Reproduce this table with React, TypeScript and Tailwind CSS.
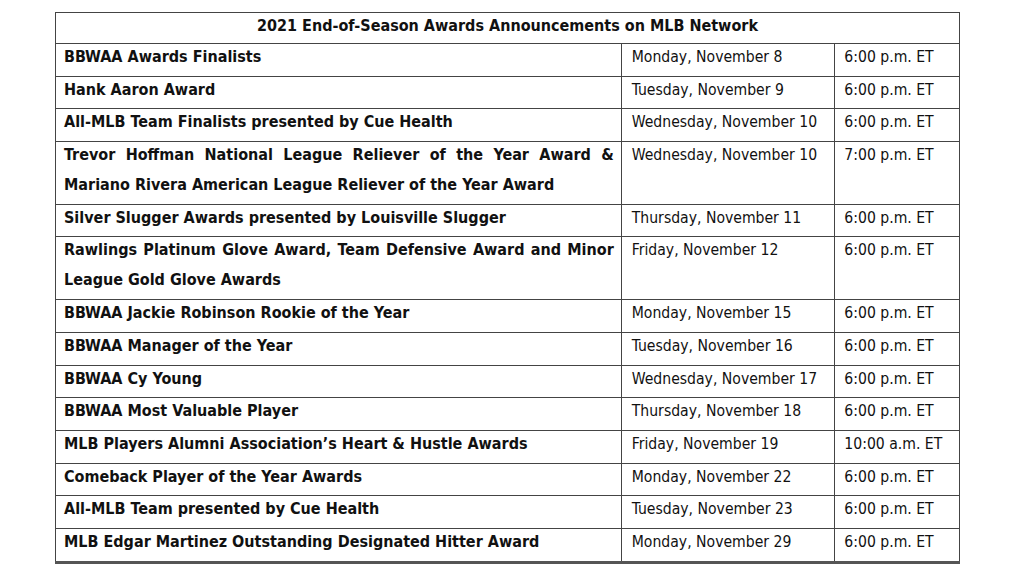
import React from "react";

type Row = { name: string | string[]; date: string; time: string };

const rows: Row[] = [
  { name: "BBWAA Awards Finalists", date: "Monday, November 8", time: "6:00 p.m. ET" },
  { name: "Hank Aaron Award", date: "Tuesday, November 9", time: "6:00 p.m. ET" },
  { name: "All-MLB Team Finalists presented by Cue Health", date: "Wednesday, November 10", time: "6:00 p.m. ET" },
  {
    name: [
      "Trevor Hoffman National League Reliever of the Year Award &",
      "Mariano Rivera American League Reliever of the Year Award",
    ],
    date: "Wednesday, November 10",
    time: "7:00 p.m. ET",
  },
  { name: "Silver Slugger Awards presented by Louisville Slugger", date: "Thursday, November 11", time: "6:00 p.m. ET" },
  {
    name: [
      "Rawlings Platinum Glove Award, Team Defensive Award and Minor",
      "League Gold Glove Awards",
    ],
    date: "Friday, November 12",
    time: "6:00 p.m. ET",
  },
  { name: "BBWAA Jackie Robinson Rookie of the Year", date: "Monday, November 15", time: "6:00 p.m. ET" },
  { name: "BBWAA Manager of the Year", date: "Tuesday, November 16", time: "6:00 p.m. ET" },
  { name: "BBWAA Cy Young", date: "Wednesday, November 17", time: "6:00 p.m. ET" },
  { name: "BBWAA Most Valuable Player", date: "Thursday, November 18", time: "6:00 p.m. ET" },
  { name: "MLB Players Alumni Association\u2019s Heart & Hustle Awards", date: "Friday, November 19", time: "10:00 a.m. ET" },
  { name: "Comeback Player of the Year Awards", date: "Monday, November 22", time: "6:00 p.m. ET" },
  { name: "All-MLB Team presented by Cue Health", date: "Tuesday, November 23", time: "6:00 p.m. ET" },
  { name: "MLB Edgar Martinez Outstanding Designated Hitter Award", date: "Monday, November 29", time: "6:00 p.m. ET" },
];

export default function App() {
  return (
    <div
      className="w-[1024px] h-[576px] bg-white overflow-hidden pt-[12px] pl-[55px]"
      style={{ fontFamily: "'DejaVu Sans Condensed', 'DejaVu Sans', Verdana, sans-serif" }}
    >
      <table className="border-collapse w-[905px] text-[#111] border-b-[3px] border-b-[#555]">
        <colgroup>
          <col className="w-[566px]" />
          <col className="w-[214px]" />
          <col className="w-[125px]" />
        </colgroup>
        <tbody>
          <tr>
            <td
              colSpan={3}
              className="border border-[#444] text-center font-bold text-[16px] leading-[26px] pb-[4px] h-[30px] align-top"
            >
              2021 End-of-Season Awards Announcements on MLB Network
            </td>
          </tr>
          {rows.map((r, i) => (
            <tr key={i}>
              <td className="border border-[#444] font-bold text-[16px] leading-[30px] pl-[8px] pr-[7px] pt-0 pb-[1.7px] align-top">
                <div className="-mt-[2px] mb-[2px]">
                  {Array.isArray(r.name) ? (
                    <>
                      <div className="whitespace-nowrap text-justify [text-align-last:justify]">{r.name[0]}</div>
                      <div className="whitespace-nowrap">{r.name[1]}</div>
                    </>
                  ) : (
                    <div className="whitespace-nowrap">{r.name}</div>
                  )}
                </div>
              </td>
              <td className="border border-[#444] text-[15.6px] leading-[30px] pl-[10px] pt-0 pb-[1.7px] align-top whitespace-nowrap">
                <div className="-mt-[2px] mb-[2px]">{r.date}</div>
              </td>
              <td className="border border-[#444] text-[15.6px] leading-[30px] pl-[9px] pt-0 pb-[1.7px] align-top whitespace-nowrap">
                <div className="-mt-[2px] mb-[2px]">{r.time}</div>
              </td>
            </tr>
          ))}
        </tbody>
      </table>
    </div>
  );
}
